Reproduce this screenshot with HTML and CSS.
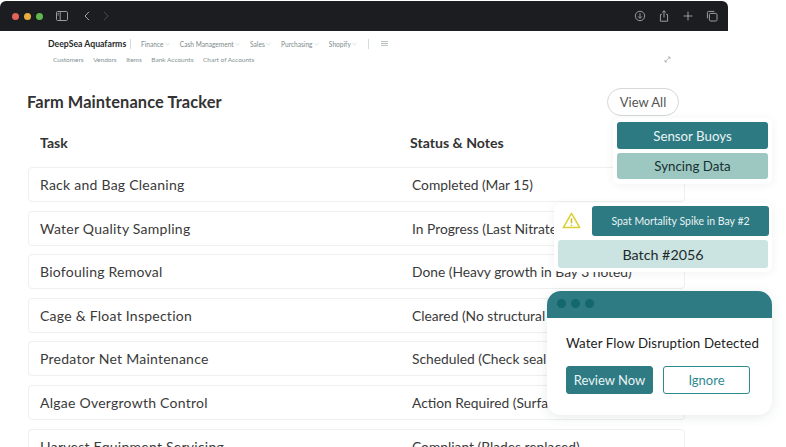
FILE: index.html
```html
<!DOCTYPE html>
<html lang="en">
<head>
<meta charset="utf-8">
<title>Farm Maintenance Tracker</title>
<link rel="stylesheet" href="styles.css">
</head>
<body>
<div class="stage">
  <header class="chrome">
    <div class="lights"><i class="red"></i><i class="amber"></i><i class="green"></i></div>
    <svg class="ic sidebar" viewBox="0 0 12 10"><rect x=".5" y=".5" width="11" height="9" rx="1.2"/><path d="M4.2.5v9M1.6 2.6h1.2M1.6 4h1.2"/></svg>
    <svg class="ic back" viewBox="0 0 6 10"><path d="M5 .8 1 5l4 4.2"/></svg>
    <svg class="ic fwd" viewBox="0 0 6 10"><path d="M1 .8 5 5 1 9.2"/></svg>
    <div class="chrome-tools">
      <svg class="ic tool" viewBox="0 0 12 12"><circle cx="6" cy="6" r="4.7"/><path d="M6 3.2v5M4 6.4l2 2 2-2"/></svg>
      <svg class="ic tool" viewBox="0 0 12 12"><path d="M3.8 4.4H2.4v6.8h7.2V4.4H8.2M6 7.5V.8M4.2 2.4 6 .8l1.8 1.6"/></svg>
      <svg class="ic tool" viewBox="0 0 12 12"><path d="M6 1.6v8.8M1.6 6h8.8"/></svg>
      <svg class="ic tool" viewBox="0 0 12 12"><rect x="3.4" y="3.4" width="7.6" height="7.6" rx="1.2"/><path d="M8.4 1.4H2.6a1.2 1.2 0 0 0-1.2 1.2v5.8"/></svg>
    </div>
  </header>

  <nav class="topnav">
    <div class="nav-main">
      <strong class="brand">DeepSea Aquafarms</strong>
      <span class="nav-sep"></span>
      <ul class="menu">
        <li>Finance<svg class="caret" viewBox="0 0 6 4"><path d="M.5.8 3 3.2 5.5.8"/></svg></li>
        <li>Cash Management<svg class="caret" viewBox="0 0 6 4"><path d="M.5.8 3 3.2 5.5.8"/></svg></li>
        <li>Sales<svg class="caret" viewBox="0 0 6 4"><path d="M.5.8 3 3.2 5.5.8"/></svg></li>
        <li>Purchasing<svg class="caret" viewBox="0 0 6 4"><path d="M.5.8 3 3.2 5.5.8"/></svg></li>
        <li>Shopify<svg class="caret" viewBox="0 0 6 4"><path d="M.5.8 3 3.2 5.5.8"/></svg></li>
      </ul>
      <span class="nav-sep"></span>
      <svg class="burger" viewBox="0 0 7 5"><path d="M0 .6h7M0 2.5h7M0 4.4h7"/></svg>
    </div>
    <div class="nav-sub">
      <ul class="submenu">
        <li>Customers</li><li>Vendors</li><li>Items</li><li>Bank Accounts</li><li>Chart of Accounts</li>
      </ul>
      <svg class="expand" viewBox="0 0 7 7"><path d="M1 6 6 1M3.8 1H6v2.2M1 3.8V6h2.2"/></svg>
    </div>
  </nav>

  <main class="content">
    <div class="title-row">
      <h1>Farm Maintenance Tracker</h1>
      <button class="view-all">View All</button>
    </div>
    <div class="table-head"><span>Task</span><span>Status &amp; Notes</span></div>
    <div class="rows">
      <div class="row"><span class="task">Rack and Bag Cleaning</span><span class="status">Completed (Mar 15)</span></div>
      <div class="row"><span class="task">Water Quality Sampling</span><span class="status">In Progress (Last Nitrate Test)</span></div>
      <div class="row"><span class="task">Biofouling Removal</span><span class="status">Done (Heavy growth in Bay 3 noted)</span></div>
      <div class="row"><span class="task">Cage &amp; Float Inspection</span><span class="status">Cleared (No structural damage)</span></div>
      <div class="row"><span class="task">Predator Net Maintenance</span><span class="status">Scheduled (Check seal lines)</span></div>
      <div class="row"><span class="task">Algae Overgrowth Control</span><span class="status">Action Required (Surface bloom)</span></div>
      <div class="row"><span class="task">Harvest Equipment Servicing</span><span class="status">Compliant (Blades replaced)</span></div>
    </div>
  </main>

  <aside class="card sensor">
    <div class="pill dark">Sensor Buoys</div>
    <div class="pill mid">Syncing Data</div>
  </aside>

  <aside class="card alert">
    <div class="alert-top">
      <svg class="warn" viewBox="0 0 20 18"><path d="M10 1.5 1.3 16.5h17.4z"/><path class="mark" d="M10 6.6v5.2M10 13.4v1.4"/></svg>
      <div class="pill dark spike">Spat Mortality Spike in Bay #2</div>
    </div>
    <div class="pill light batch">Batch #2056</div>
  </aside>

  <aside class="dialog">
    <div class="dialog-bar"><i></i><i></i><i></i></div>
    <div class="dialog-body">
      <p>Water Flow Disruption Detected</p>
      <div class="actions">
        <button class="btn solid">Review Now</button>
        <button class="btn outline">Ignore</button>
      </div>
    </div>
  </aside>
</div>
</body>
</html>
```
FILE: styles.css
```css
* { box-sizing: border-box; }
html, body { margin: 0; height: 100%; background: #fff; overflow: hidden; }
body { font-family: "Lato", "Noto Sans", sans-serif; color: #2b2b2b; }
ul { list-style: none; margin: 0; padding: 0; }
svg { display: block; fill: none; }

.stage { position: relative; width: 786px; height: 447px; overflow: hidden; }

/* browser chrome */
.chrome { width: 728px; height: 30px; margin-top: 1px; background: #1c1d21; border-radius: 6px 6px 0 0; display: flex; align-items: center; padding: 0 10px 0 12px; }
.lights { display: flex; gap: 5px; }
.lights i { width: 7px; height: 7px; border-radius: 50%; }
.red { background: #e2635a; }
.amber { background: #e9ae3f; }
.green { background: #5fb84e; }
.ic { stroke: #9b9c9f; stroke-width: 1; }
.sidebar { width: 12px; height: 10px; margin-left: 13px; }
.back { width: 6px; height: 10px; margin-left: 16px; stroke: #a9aaad; }
.fwd { width: 6px; height: 10px; margin-left: 13px; stroke: #4a4b4f; }
.chrome-tools { margin-left: auto; display: flex; gap: 12px; }
.tool { width: 12px; height: 12px; }

/* app nav */
.topnav { height: 39px; padding: 5px 0 0 48px; }
.nav-main { display: flex; align-items: center; height: 15px; }
.brand { font-size: 8.7px; font-weight: 700; color: #1f2a2a; width: 82px; white-space: nowrap; }
.nav-sep { width: 1px; height: 10px; background: #d6dada; }
.menu { display: flex; margin-left: 10px; gap: 10.3px; width: 227px; font-size: 6.6px; color: #7d8a8a; }
.menu li { display: flex; align-items: center; gap: 1px; white-space: nowrap; }
.caret { width: 5px; height: 4px; stroke: #a9b3b3; stroke-width: .5; }
.burger { width: 7px; height: 5px; margin-left: 12px; stroke: #9ba3a3; stroke-width: .7; }
.nav-sub { display: flex; align-items: center; height: 14px; margin-top: 1px; padding-left: 5px; }
.submenu { display: flex; gap: 9.5px; font-size: 6.5px; color: #7f9393; }
.expand { width: 7px; height: 7px; margin-left: 410px; stroke: #8c9494; stroke-width: .6; }

/* content */
.content { padding: 0 101px 0 28px; }
.title-row { display: flex; align-items: center; justify-content: space-between; height: 28px; margin-top: 18px; }
h1 { margin: 0 0 2px -1px; font-size: 16.4px; font-weight: 700; letter-spacing: .1px; color: #333; }
.view-all { width: 72px; height: 28px; margin-right: 6px; border: 1px solid #d5d8d8; border-radius: 14px; background: #fff; font: 400 13px "Lato", sans-serif; color: #555; padding: 0; }
.table-head { display: grid; grid-template-columns: 370px 1fr; height: 32px; margin-top: 10px; padding: 0 12px; align-items: center; font-size: 14.1px; font-weight: 700; color: #333; }
.rows { display: flex; flex-direction: column; gap: 8.6px; margin-top: 9px; width: 657px; }
.row { display: grid; grid-template-columns: 372px 1fr; flex: none; height: 35px; padding: 0 11px; align-items: center; border: 1px solid #eeefef; border-radius: 4px; color: #3a3a3a; white-space: nowrap; }
.task { font-size: 14px; letter-spacing: .25px; }
.status { font-size: 13.8px; }

/* floating cards */
.card { position: absolute; background: #fff; border-radius: 6px; box-shadow: 0 1px 8px rgba(60, 80, 80, .08); padding: 4px; display: flex; flex-direction: column; gap: 4px; }
.sensor { left: 613px; top: 118px; width: 159px; height: 66px; }
.pill { display: flex; align-items: center; justify-content: center; border-radius: 3px; font-size: 13.3px; }
.pill.dark { background: #2d7a83; color: #e9f3f3; }
.pill.mid { background: #9cc8c1; color: #173030; }
.pill.light { background: #cbe4e1; color: #1e2a2a; }
.sensor .pill { height: 27px; }
.sensor .pill.mid { height: 26px; }
.alert { left: 554px; top: 203px; width: 218px; height: 69px; padding-top: 3px; }
.alert-top { display: flex; align-items: center; justify-content: space-between; padding-left: 4px; }
.warn { width: 19px; height: 17px; margin-bottom: 2px; stroke: #d9cf2f; stroke-width: 1.6; stroke-linejoin: round; }
.warn .mark { stroke: #c9bf2b; }
.spike { width: 177px; height: 30px; margin-right: -1px; font-size: 10.5px; }
.batch { height: 29px; font-size: 14.3px; width: 210px; }
.dialog { position: absolute; left: 547px; top: 291px; width: 225px; height: 124px; background: #fff; border-radius: 14px; box-shadow: 0 2px 12px rgba(60, 80, 80, .12); overflow: hidden; }
.dialog-bar { height: 27px; background: #2f7b84; display: flex; align-items: center; gap: 5px; padding: 0 10px 2px; }
.dialog-bar i { width: 9px; height: 9px; border-radius: 50%; background: #13686c; }
.dialog-body { padding: 17px 19px; }
.dialog-body p { margin: 0; font-size: 13.3px; font-weight: 400; letter-spacing: .1px; color: #222; white-space: nowrap; }
.actions { display: flex; gap: 10px; margin-top: 15px; }
.btn { width: 87px; height: 28px; border-radius: 3px; font: 400 13px "Lato", sans-serif; padding: 0; }
.solid { background: #2f7b84; border: 1px solid #2f7b84; color: #eaf4f4; }
.outline { background: #fff; border: 1.5px solid #2f8a8f; color: #2f8a8f; }
```
